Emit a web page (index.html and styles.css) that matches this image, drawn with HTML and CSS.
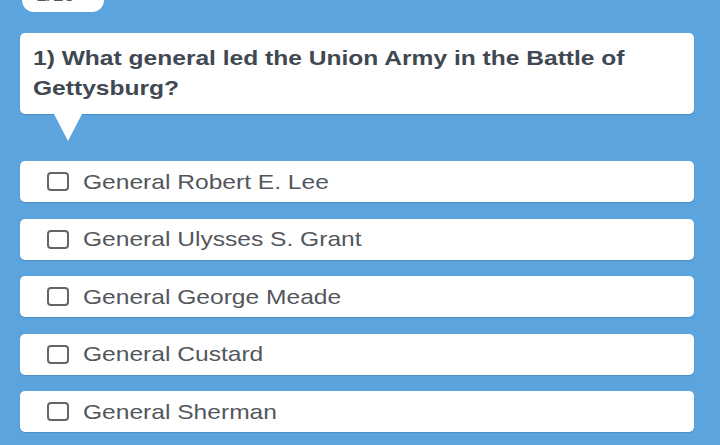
FILE: index.html
```html
<!DOCTYPE html>
<html lang="en">
<head>
<meta charset="utf-8">
<title>Quiz</title>
<link rel="stylesheet" href="styles.css">
</head>
<body>
<main class="quiz">
  <div class="progress"><span class="progress-pill"><span class="wide">1/10</span></span></div>
  <div class="question"><span class="question-text">1) What general led the Union Army in the Battle of Gettysburg?</span></div>
  <ul class="answers">
    <li class="answer"><span class="box"></span><span class="label">General Robert E. Lee</span></li>
    <li class="answer"><span class="box"></span><span class="label">General Ulysses S. Grant</span></li>
    <li class="answer"><span class="box"></span><span class="label">General George Meade</span></li>
    <li class="answer"><span class="box"></span><span class="label">General Custard</span></li>
    <li class="answer"><span class="box"></span><span class="label">General Sherman</span></li>
  </ul>
</main>
</body>
</html>
```
FILE: styles.css
```css
html, body {
  margin: 0;
  padding: 0;
  height: 100%;
  overflow: hidden;
}

body {
  background: #5ca4de;
  font-family: "Liberation Sans", Arial, sans-serif;
}

.quiz {
  padding: 0 26px 0 20px;
}

/* the app renders its type slightly widened */
.wide,
.question-text,
.label {
  display: inline-block;
  transform: scaleX(1.17);
  transform-origin: left center;
}

.progress {
  height: 12px;
  display: flex;
  align-items: flex-end;
}

.progress-pill {
  display: block;
  margin-left: 2px;
  width: 82px;
  height: 26px;
  line-height: 20px;
  box-sizing: border-box;
  padding-left: 14px;
  background: #fff;
  border-radius: 12px;
  color: #555a60;
  font-size: 17px;
}

.question {
  position: relative;
  margin-top: 21px;
  background: #fff;
  border-radius: 5px;
  box-shadow: 0 1px 1px rgba(40, 70, 110, 0.25);
  padding: 10px 14px 11px 13px;
  font-weight: bold;
  font-size: 21px;
  line-height: 30px;
  color: #404852;
}

.question-text {
  display: block;
  width: 85.4%;
  transform-origin: left top;
}

.question::after {
  content: "";
  position: absolute;
  left: 34px;
  top: 100%;
  border-left: 14px solid transparent;
  border-right: 14px solid transparent;
  border-top: 27px solid #fff;
}

.answers {
  list-style: none;
  margin: 47px 0 0;
  padding: 0;
  display: flex;
  flex-direction: column;
  gap: 16.5px;
}

.answer {
  height: 41px;
  background: #fff;
  border-radius: 5px;
  box-shadow: 0 1px 1px rgba(40, 70, 110, 0.25);
  display: flex;
  align-items: center;
  padding-left: 27px;
  color: #53575c;
  font-size: 21px;
}

.box {
  width: 22px;
  height: 19px;
  box-sizing: border-box;
  border: 2px solid #62666b;
  border-radius: 4px;
  margin-right: 14px;
  flex: none;
}
```
